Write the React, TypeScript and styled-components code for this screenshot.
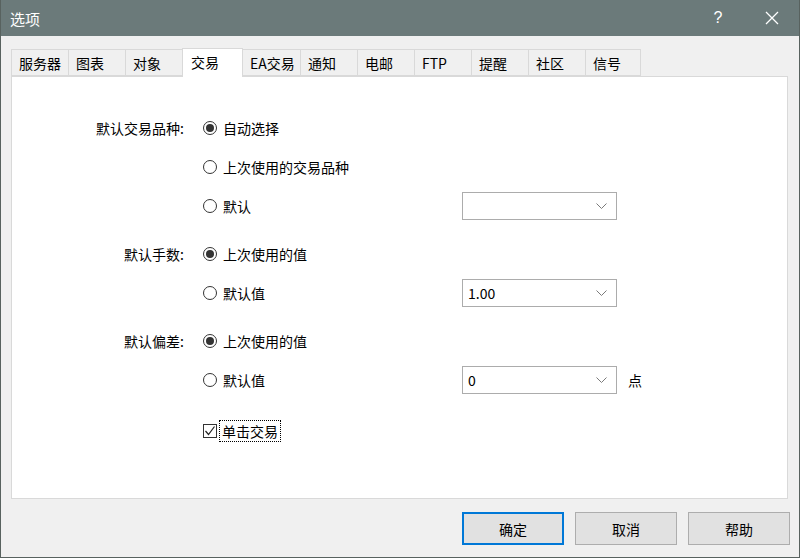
import React from 'react';
import styled, { createGlobalStyle } from 'styled-components';

const GlobalStyle = createGlobalStyle`
  html, body {
    margin: 0;
    padding: 0;
    background: #f0f0f0;
  }
  body {
    font-family: "Noto Sans CJK SC", "Noto Sans", "Liberation Sans", sans-serif;
    font-size: 14px;
    color: #000;
  }
  * { box-sizing: border-box; }
`;

const Window = styled.div`
  width: 800px;
  height: 558px;
  display: flex;
  flex-direction: column;
  background: #f0f0f0;
  border: 1px solid #58625f;
  border-top: none;
`;

const TitleBar = styled.div`
  height: 36px;
  flex: none;
  background: #6b7a7a;
  color: #fff;
  display: flex;
  align-items: center;
  padding-left: 9px;
  font-size: 15px;
`;

const TitleText = styled.div`
  flex: 1;
`;

const TitleButton = styled.div`
  width: 54px;
  height: 36px;
  display: flex;
  align-items: center;
  justify-content: center;
  color: #fff;
  font-size: 16px;
  font-family: "Liberation Sans", sans-serif;
`;

const Body = styled.div`
  flex: 1;
  display: flex;
  flex-direction: column;
  padding: 12px 0 0 10px;
`;

const TabStrip = styled.div`
  display: flex;
  align-items: flex-end;
  height: 28px;
  padding-left: 1px;
  position: relative;
  z-index: 1;
`;

const Tab = styled.div<{ $active?: boolean; $w: number }>`
  width: ${p => p.$w}px;
  height: ${p => (p.$active ? 29 : 27)}px;
  padding-left: ${p => (p.$active ? 8 : 7)}px;
  padding-top: 3px;
  background: ${p => (p.$active ? '#fff' : '#f0f0f0')};
  border: 1px solid #d9d9d9;
  border-bottom: ${p => (p.$active ? 'none' : '1px solid #d9d9d9')};
  margin-left: -1px;
  margin-bottom: ${p => (p.$active ? -1 : 0)}px;
  white-space: nowrap;
  line-height: 20px;
`;

const Panel = styled.div`
  height: 423px;
  margin-right: 11px;
  background: #fff;
  border: 1px solid #d9d9d9;
  display: flex;
  flex-direction: column;
  gap: 20px;
  padding-top: 37px;
`;

const Group = styled.div<{ $extra?: number }>`
  display: grid;
  grid-template-columns: 191px 259px 155px auto;
  grid-auto-rows: 28px;
  row-gap: 11px;
  margin-top: ${p => p.$extra || 0}px;
`;

const Label = styled.div`
  grid-column: 1;
  text-align: right;
  padding-right: 19px;
  display: flex;
  align-items: center;
  justify-content: flex-end;
`;

const Option = styled.label`
  grid-column: 2;
  display: flex;
  align-items: center;
  gap: 6px;
`;

const RadioCircle = styled.span<{ $checked?: boolean }>`
  width: 14px;
  height: 14px;
  border-radius: 50%;
  border: 1px solid #333;
  background: #fff;
  display: flex;
  align-items: center;
  justify-content: center;
  &::after {
    content: '';
    width: 8px;
    height: 8px;
    border-radius: 50%;
    background: ${p => (p.$checked ? '#333' : 'transparent')};
  }
`;

const CheckBox = styled.span`
  width: 14px;
  height: 14px;
  border: 1px solid #333;
  background: #fff;
  display: flex;
  align-items: center;
  justify-content: center;
`;

const FocusText = styled.span`
  outline: 1px dotted #000;
  padding: 0 2px;
  line-height: 20px;
  margin-left: -3px;
`;

const Select = styled.div`
  grid-column: 3;
  border: 1px solid #acacac;
  background: #fff;
  display: flex;
  align-items: center;
  justify-content: space-between;
  padding: 0 9px 0 5px;
`;

const Unit = styled.div`
  grid-column: 4;
  display: flex;
  align-items: center;
  padding-left: 11px;
`;

const Footer = styled.div`
  display: flex;
  justify-content: flex-end;
  gap: 11px;
  padding: 13px 9px 0 0;
`;

const Button = styled.div<{ $default?: boolean }>`
  width: 102px;
  height: 33px;
  display: flex;
  align-items: center;
  justify-content: center;
  background: #e1e1e1;
  border: ${p => (p.$default ? '2px solid #0078d7' : '1px solid #adadad')};
`;

const Chevron = () => (
  <svg width="11" height="6" viewBox="0 0 11 6">
    <path d="M0.5 0.5 L5.5 5.5 L10.5 0.5" fill="none" stroke="#7a7a7a" strokeWidth="1" />
  </svg>
);

const tabs: [string, number][] = [
  ['服务器', 58], ['图表', 58], ['对象', 58], ['交易', 61], ['EA交易', 59], ['通知', 58],
  ['电邮', 58], ['FTP', 58], ['提醒', 58], ['社区', 58], ['信号', 56],
];

const App: React.FC = () => (
  <>
    <GlobalStyle />
    <Window>
      <TitleBar>
        <TitleText>选项</TitleText>
        <TitleButton>?</TitleButton>
        <TitleButton>
          <svg width="14" height="14" viewBox="0 0 14 14">
            <path d="M1 1 L13 13 M13 1 L1 13" stroke="#fff" strokeWidth="1.3" />
          </svg>
        </TitleButton>
      </TitleBar>
      <Body>
        <TabStrip>
          {tabs.map(([t, w]) => (
            <Tab key={t} $w={w} $active={t === '交易'}>{t}</Tab>
          ))}
        </TabStrip>
        <Panel>
          <Group>
            <Label>默认交易品种:</Label>
            <Option><RadioCircle $checked />自动选择</Option>
            <Option style={{ gridRow: 2 }}><RadioCircle />上次使用的交易品种</Option>
            <Option style={{ gridRow: 3 }}><RadioCircle />默认</Option>
            <Select style={{ gridRow: 3 }}><span /><Chevron /></Select>
          </Group>
          <Group>
            <Label>默认手数:</Label>
            <Option><RadioCircle $checked />上次使用的值</Option>
            <Option style={{ gridRow: 2 }}><RadioCircle />默认值</Option>
            <Select style={{ gridRow: 2 }}><span>1.00</span><Chevron /></Select>
          </Group>
          <Group>
            <Label>默认偏差:</Label>
            <Option><RadioCircle $checked />上次使用的值</Option>
            <Option style={{ gridRow: 2 }}><RadioCircle />默认值</Option>
            <Select style={{ gridRow: 2 }}><span>0</span><Chevron /></Select>
            <Unit style={{ gridRow: 2 }}>点</Unit>
          </Group>
          <Group $extra={3}>
            <Option>
              <CheckBox>
                <svg width="12" height="12" viewBox="0 0 12 12">
                  <path d="M1.5 6 L4.5 9.5 L10.5 1.5" fill="none" stroke="#222" strokeWidth="1.2" />
                </svg>
              </CheckBox>
              <FocusText>单击交易</FocusText>
            </Option>
          </Group>
        </Panel>
        <Footer>
          <Button $default>确定</Button>
          <Button>取消</Button>
          <Button>帮助</Button>
        </Footer>
      </Body>
    </Window>
  </>
);

export default App;
